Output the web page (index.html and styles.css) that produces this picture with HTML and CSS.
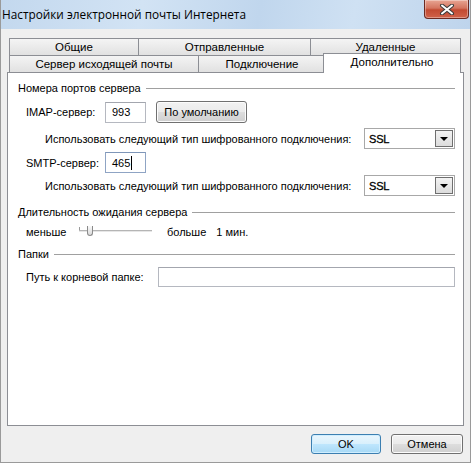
FILE: index.html
```html
<!DOCTYPE html>
<html>
<head>
<meta charset="utf-8">
<link rel="stylesheet" href="styles.css">
</head>
<body>
<div class="window">
  <div class="titlebar">
    <span class="title">Настройки электронной почты Интернета</span>
    <div class="close">
      <svg width="16" height="11" viewBox="0 0 16 11"><path d="M3 1.5 L13 9.5 M13 1.5 L3 9.5" stroke="#3a3a3a" stroke-width="4" stroke-linecap="round"/><path d="M3 1.5 L13 9.5 M13 1.5 L3 9.5" stroke="#ffffff" stroke-width="2" stroke-linecap="round"/></svg>
    </div>
  </div>
  <div class="client">
    <div class="tabs">
      <div class="tabrow">
        <div class="tab w1">Общие</div>
        <div class="tab w2">Отправленные</div>
        <div class="tab w3">Удаленные</div>
      </div>
      <div class="tabrow">
        <div class="tab w4">Сервер исходящей почты</div>
        <div class="tab w5">Подключение</div>
        <div class="tab sel">Дополнительно</div>
      </div>
    </div>
    <div class="panel">
      <div class="group"><span>Номера портов сервера</span><i class="line"></i></div>
      <div class="row r-imap">
        <span class="lbl">IMAP-сервер:</span>
        <div class="edit">993</div>
        <div class="btn">По умолчанию</div>
      </div>
      <div class="row r-enc1">
        <span class="enc">Использовать следующий тип шифрованного подключения:</span>
        <div class="combo"><span>SSL</span><div class="drop"><i class="arrow"></i></div></div>
      </div>
      <div class="row r-smtp">
        <span class="lbl">SMTP-сервер:</span>
        <div class="edit focus">465<i class="caret"></i></div>
      </div>
      <div class="row r-enc2">
        <span class="enc">Использовать следующий тип шифрованного подключения:</span>
        <div class="combo"><span>SSL</span><div class="drop"><i class="arrow"></i></div></div>
      </div>
      <div class="group g2"><span>Длительность ожидания сервера</span><i class="line"></i></div>
      <div class="row r-slider">
        <span class="less">меньше</span>
        <div class="slider"><i class="track"></i><i class="tick"></i><i class="thumb"></i></div>
        <span class="more">больше</span>
        <span class="val">1 мин.</span>
      </div>
      <div class="group g3"><span>Папки</span><i class="line"></i></div>
      <div class="row r-path">
        <span class="plbl">Путь к корневой папке:</span>
        <div class="edit wide"></div>
      </div>
    </div>
    <div class="buttons">
      <div class="btn ok">OK</div>
      <div class="btn cancel">Отмена</div>
    </div>
  </div>
</div>
</body>
</html>
```

FILE: styles.css
```css
* { box-sizing: border-box; }
html, body { margin: 0; padding: 0; background: #f0f0f0; }
body { font-family: Tahoma, "Liberation Sans", "DejaVu Sans", sans-serif; font-size: 11px; color: #000; white-space: nowrap; }

.window {
  width: 471px; height: 463px;
  display: flex; flex-direction: column;
  border-left: 1px solid #9a9a9a; border-right: 1px solid #9a9a9a; border-bottom: 1px solid #9a9a9a;
  background: #efefef;
  position: relative;
}
.titlebar {
  height: 29px; flex: none;
  background: linear-gradient(100deg, #c3d8ee 0%, #d2e3f4 30%, #c0d6ed 55%, #cfe1f3 75%, #bed4ec 100%);
  display: flex; align-items: center;
  position: relative;
}
.title {
  font-family: "Open Sans", "Liberation Sans", sans-serif; font-size: 11.8px;
  margin-left: 1px; margin-top: -1px; color: #000;
}
.close {
  position: absolute; right: 1px; top: 0;
  width: 45px; height: 19px;
  border: 1px solid #6b2a22; border-top: none;
  border-radius: 0 0 4px 4px;
  background: linear-gradient(#e8a593 0%, #d47560 45%, #c24a32 55%, #d0624a 100%);
  display: flex; align-items: center; justify-content: center;
  box-shadow: inset 0 0 0 1px rgba(255,255,255,0.35);
}
.client { flex: 1; display: flex; flex-direction: column; padding: 9px 0 0 6px; background: #efefef; }

.tabs { display: flex; flex-direction: column; padding-left: 2px; }
.tabrow { display: flex; height: 17px; align-items: flex-end; }
.tab {
  height: 17px;
  border: 1px solid #8c8e94; border-bottom: none; margin-right: -1px;
  background: linear-gradient(#f4f4f4, #e1e1e1);
  display: flex; align-items: center; justify-content: center;
  font-size: 11.5px; padding-bottom: 1px;
}
.w1 { width: 130px; } .w2 { width: 173px; } .w3 { width: 151px; }
.w4 { width: 190px; } .w5 { width: 128px; }
.tab.sel {
  width: 138px; height: 20px; background: #fff; margin-bottom: -1px;
  align-items: flex-start; padding-top: 2px; position: relative; z-index: 2;
  margin-left: -2px;
}

.panel {
  width: 457px; height: 354px;
  border: 1px solid #8c8e94; background: #fff;
  padding: 8px 8px 0 10px;
  display: flex; flex-direction: column;
}
.group { display: flex; align-items: center; height: 14px; }
.group .line { flex: 1; border-top: 1px solid #a0a0a0; margin-left: 5px; margin-top: 1px; }
.g2 { margin-top: 9px; }
.g3 { margin-top: 8px; }

.row { display: flex; align-items: center; padding-left: 8px; }
.r-imap { margin-top: 6px; height: 22px; }
.r-enc1 { margin-top: 5px; height: 21px; }
.r-smtp { margin-top: 3px; height: 21px; }
.r-enc2 { margin-top: 2px; height: 21px; }
.r-slider { margin-top: 6px; height: 14px; }
.r-path { margin-top: 6px; height: 20px; }

.lbl { width: 79px; }
.edit {
  width: 41px; height: 21px;
  border: 1px solid #b5b8c0; border-top-color: #a3a6ae;
  background: #fff; padding-left: 6px;
  display: flex; align-items: center;
}
.edit.focus { border-color: #8fa4c4; border-top-color: #7f96b8; }
.caret { display: inline-block; width: 1px; height: 14px; background: #000; margin-left: 1px; }
.edit.wide { width: 298px; height: 20px; margin-left: 9px; }

.btn {
  display: flex; align-items: center; justify-content: center;
  border: 1px solid #707070; border-radius: 3px;
  background: linear-gradient(#f2f2f2 0%, #ebebeb 48%, #dddddd 52%, #cfcfcf 100%);
  box-shadow: inset 0 0 0 1px #fcfcfc;
}
.r-imap .btn { width: 91px; height: 22px; margin-left: 10px; }

.enc { margin-left: 19px; }
.combo {
  margin-left: auto; width: 91px; height: 21px;
  border: 1px solid #a8a8a8; background: #fff;
  display: flex; align-items: center; padding-left: 4px;
  font-family: "Liberation Sans", sans-serif; font-size: 11px;
}
.combo span { -webkit-text-stroke: 0.3px #000; letter-spacing: -0.2px; }
.drop {
  margin-left: auto; margin-right: 1px;
  width: 18px; height: 17px;
  border: 1px solid #6f6f6f;
  background: linear-gradient(#f3f3f3, #dcdcdc);
  display: flex; align-items: center; justify-content: center;
}
.arrow { width: 0; height: 0; border-left: 4px solid transparent; border-right: 4px solid transparent; border-top: 4px solid #000; margin-top: 1px; }

.less { width: 53px; }
.slider { position: relative; width: 73px; height: 14px; }
.track { position: absolute; left: 0; right: 0; top: 5px; height: 2px; border-top: 1px solid #b5b5b5; border-bottom: 1px solid #e6e6e6; }
.tick { position: absolute; left: 0; top: 2px; width: 1px; height: 3px; background: #9a9a9a; }
.thumb {
  position: absolute; left: 8px; top: 1px; width: 6px; height: 10px;
  border: 1px solid #8a8a8a; border-top: none; border-radius: 0 0 3px 3px;
  background: linear-gradient(#fafafa, #dadada);
}
.more { margin-left: 15px; }
.val { margin-left: 10px; }

.plbl { width: 124px; }

.buttons { display: flex; justify-content: flex-end; padding-right: 7px; margin-top: 8px; }
.buttons .btn { height: 20px; }
.ok {
  width: 70px; margin-right: 10px;
  border-color: #3c7fb1;
  background: linear-gradient(#eaf6fd 0%, #d9f0fc 48%, #bee6fd 52%, #a7d9f5 100%);
  box-shadow: inset 0 0 0 1px #cfeeff;
}
.cancel { width: 72px; }
```
